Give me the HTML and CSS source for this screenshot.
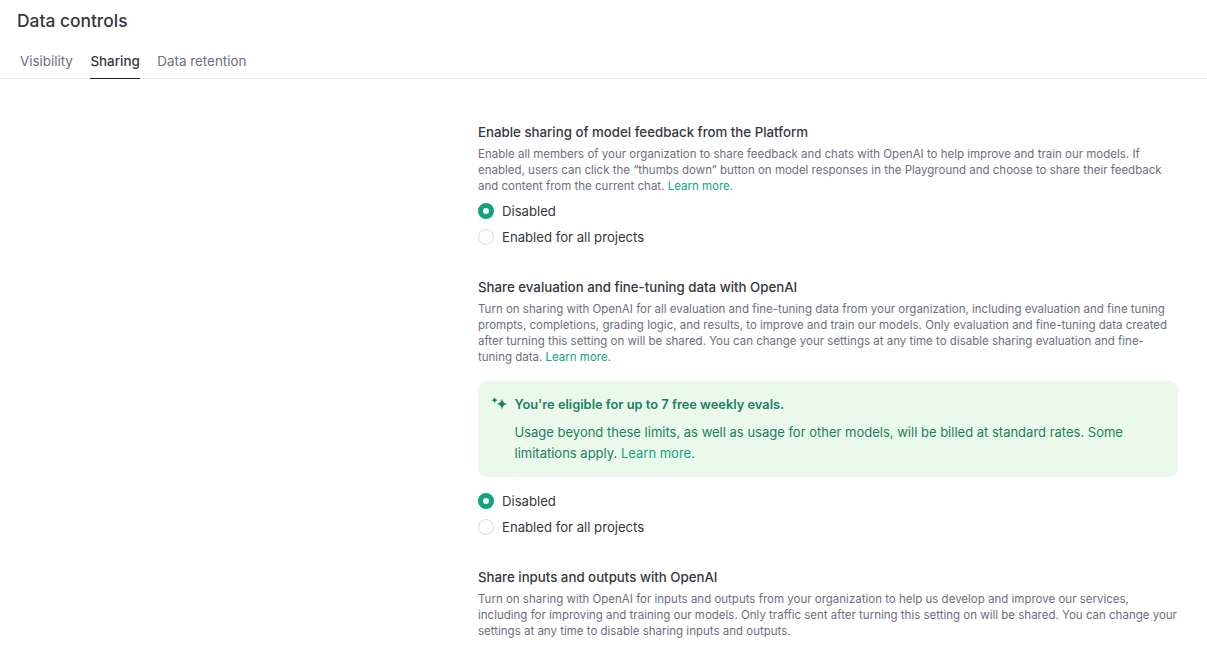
FILE: index.html
```html
<!DOCTYPE html>
<html lang="en">
<head>
<meta charset="utf-8">
<title>Data controls</title>
<link rel="stylesheet" href="styles.css">
</head>
<body>
<header class="top">
  <h1 class="title">Data controls</h1>
  <nav class="tabs">
    <a class="tab">Visibility</a>
    <a class="tab active">Sharing</a>
    <a class="tab">Data retention</a>
  </nav>
</header>
<main class="content">
  <section class="setting">
    <h2 class="heading">Enable sharing of model feedback from the Platform</h2>
    <p class="desc">Enable all members of your organization to share feedback and chats with OpenAI to help improve and train our models. If<br>enabled, users can click the “thumbs down” button on model responses in the Playground and choose to share their feedback<br>and content from the current chat. <a class="link">Learn more</a>.</p>
    <div class="radios">
      <div class="radio"><span class="dot on"></span><span>Disabled</span></div>
      <div class="radio"><span class="dot"></span><span>Enabled for all projects</span></div>
    </div>
  </section>
  <section class="setting">
    <h2 class="heading">Share evaluation and fine-tuning data with OpenAI</h2>
    <p class="desc">Turn on sharing with OpenAI for all evaluation and fine-tuning data from your organization, including evaluation and fine tuning<br>prompts, completions, grading logic, and results, to improve and train our models. Only evaluation and fine-tuning data created<br>after turning this setting on will be shared. You can change your settings at any time to disable sharing evaluation and fine-<br>tuning data. <a class="link">Learn more</a>.</p>
    <div class="notice">
      <svg class="spark" width="16" height="16" viewBox="0 0 16 16" aria-hidden="true"><path d="M11 2.6c.5 3 1.800 4.700 5.200 5.400-3.400.7-4.700 2.400-5.200 5.400-.5-3-1.800-4.700-5.200-5.400 3.400-.7 4.700-2.400 5.200-5.400Z"/><path d="M3.600 1c.3 1.800 1.200 2.800 3.200 3.200-2 .4-2.900 1.400-3.200 3.200-.3-1.800-1.200-2.800-3.200-3.200 2-.4 2.900-1.400 3.200-3.200Z"/></svg>
      <div class="notice-body">
        <div class="notice-title">You're eligible for up to 7 free weekly evals.</div>
        <div class="notice-text">Usage beyond these limits, as well as usage for other models, will be billed at standard rates. Some<br>limitations apply. <a class="link">Learn more.</a></div>
      </div>
    </div>
    <div class="radios">
      <div class="radio"><span class="dot on"></span><span>Disabled</span></div>
      <div class="radio"><span class="dot"></span><span>Enabled for all projects</span></div>
    </div>
  </section>
  <section class="setting">
    <h2 class="heading">Share inputs and outputs with OpenAI</h2>
    <p class="desc">Turn on sharing with OpenAI for inputs and outputs from your organization to help us develop and improve our services,<br>including for improving and training our models. Only traffic sent after turning this setting on will be shared. You can change your<br>settings at any time to disable sharing inputs and outputs.</p>
  </section>
</main>
</body>
</html>
```
FILE: styles.css
```css
* { box-sizing: border-box; }
html, body { margin: 0; height: 100%; overflow: hidden; }
body { background: #fff; color: #353740; font-family: Inter, "Liberation Sans", sans-serif; }
.top { border-bottom: 1px solid #ececf1; height: 79px; padding: 10px 0 0 17px; }
.title { margin: 0; font-size: 17.4px; line-height: 21px; font-weight: 500; color: #353740; }
.tabs { display: flex; gap: 17.5px; margin-top: 20px; padding-left: 3px; }
.tab { font-size: 13.4px; line-height: 20px; height: 28px; color: #6e6e80; }
.tab.active { color: #353740; font-weight: 500; border-bottom: 1px solid #202123; }
.content { margin-left: 478px; width: 700px; padding-top: 44px; }
.setting { margin-bottom: 31px; }
.heading { margin: 0; font-size: 13.28px; line-height: 18px; font-weight: 500; color: #353740; }
.desc { margin: 5px 0 0; font-size: 11.5px; line-height: 16px; color: #6e6e80; white-space: nowrap; }
.link { color: #10a37f; }
.radios { display: flex; flex-direction: column; gap: 6px; margin-top: 7px; }
.radio { display: flex; align-items: center; gap: 8px; height: 20px; font-size: 13.15px; color: #353740; }
.dot { width: 16px; height: 16px; border-radius: 50%; border: 1px solid #d9d9e3; background: #fff; }
.dot.on { border: 5px solid #10a37f; }
.notice { display: flex; gap: 7.5px; margin: 16px 0 14px; padding: 14px 14px 13px 13px; background: #ebf9eb; border-radius: 8px; color: #1a7f64; }
.spark { flex: none; margin-top: 1px; fill: #1a7f64; }
.notice-title { font-size: 12.85px; line-height: 20px; font-weight: 600; }
.notice-text { margin-top: 7px; font-size: 13px; line-height: 21px; white-space: nowrap; }
```
